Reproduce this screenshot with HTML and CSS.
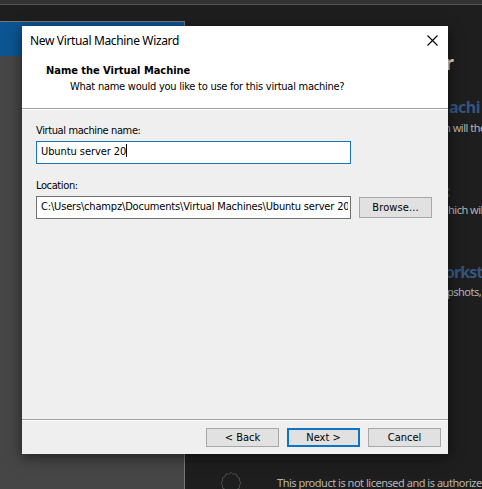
FILE: index.html
```html
<!DOCTYPE html>
<html lang="en">
<head>
<meta charset="utf-8">
<title>New Virtual Machine Wizard</title>
<link rel="stylesheet" href="styles.css">
</head>
<body>
<div class="app">
  <div class="toolbar"></div>
  <div class="workspace">
    <aside class="library"><div class="selected"></div></aside>
    <main class="home">
      <div class="hero"><span>r</span></div>
      <div class="link first"><span>achi</span></div>
      <div class="note n1"><span>n will the</span></div>
      <div class="link second"><span>:</span></div>
      <div class="note n2"><span>hich will</span></div>
      <div class="link third"><span>orkst</span></div>
      <div class="note n3"><span>pshots,</span></div>
      <div class="license">
        <svg width="24" height="24" viewBox="0 0 24 24"><path d="M12 1.500Q14 4 17 3Q17.500 6.500 20.500 7Q19.500 10 22 12Q19.500 14 20.500 17Q17.500 17.500 17 21Q14 20 12 22.500Q10 20 7 21Q6.500 17.500 3.500 17Q4.500 14 2 12Q4.500 10 3.500 7Q6.500 6.500 7 3Q10 4 12 1.500Z"/></svg>
        <span class="license-text">This product is not licensed and is authorize</span>
      </div>
    </main>
  </div>
</div>
<section class="dialog">
  <header class="head">
    <div class="titlebar">
      <span class="title">New Virtual Machine Wizard</span>
      <svg class="close" width="11" height="11" viewBox="0 0 11 11"><path d="M.5 .5L10.500 10.500M10.500 .5L.5 10.500"/></svg>
    </div>
    <h1><span>Name the Virtual Machine</span></h1>
    <p><span class="question">What name would you like to use for this virtual machine?</span></p>
  </header>
  <div class="content">
    <div class="label"><span>Virtual machine name:</span></div>
    <div class="field active"><span class="name">Ubuntu server 20</span><i class="caret"></i></div>
    <div class="label"><span>Location:</span></div>
    <div class="row">
      <div class="field"><div class="clip"><span class="path">C:\Users\champz\Documents\Virtual Machines\Ubuntu server 20</span></div></div>
      <div class="btn browse"><span>Browse...</span></div>
    </div>
  </div>
  <footer class="actions">
    <div class="btn"><span>&lt; Back</span></div>
    <div class="btn primary"><span>Next &gt;</span></div>
    <div class="btn"><span>Cancel</span></div>
  </footer>
</section>
</body>
</html>
```
FILE: styles.css
```css
* { box-sizing: border-box; }
body { margin: 0; width: 482px; height: 489px; overflow: hidden; background: #1e1e1e; font: 11px/14px "DejaVu Sans Condensed", "DejaVu Sans", sans-serif; font-stretch: condensed; color: #000; }
span { white-space: nowrap; }
.app { height: 489px; display: flex; flex-direction: column; overflow: hidden; }
.toolbar { height: 5px; flex: none; background: #333; border-bottom: 1px solid #575757; }
.workspace { flex: 1; display: flex; padding-top: 16px; min-height: 0; }
.library { width: 185px; flex: none; background: #464646; border-top: 1px solid #777; border-right: 1px solid #777; }
.selected { height: 34px; background: #0c5592; }
.home { flex: 1; min-width: 0; overflow: hidden; color: #b5b5b5; }
.home > div { padding-left: 264px; }
.hero { height: 77px; padding-top: 30px; font: bold 20px/24px "Noto Sans", sans-serif; color: #e6d9c8; }
.hero span { margin-left: -4px; }
.link { font: bold 16px/18px "Noto Sans", sans-serif; letter-spacing: -.5px; color: #34557f; }
.first { height: 23px; }
.note { font: 11px/14px "Noto Sans", sans-serif; letter-spacing: -.5px; }
.n1 { height: 61px; }
.n1 span { margin-left: -5px; }
.second { height: 21px; color: #444; }
.second span { margin-left: -3px; }
.n2 { height: 60px; }
.n2 span { margin-left: -1px; }
.third { height: 22px; }
.third span { margin-left: -4px; letter-spacing: -.9px; }
.n3 { height: 186px; }
.n3 span { margin-left: -2px; }
.home > .license { display: flex; padding-left: 34px; gap: 34px; height: 24px; }
.license svg { flex: none; fill: none; stroke: #4b5052; }
.license-text { font: 11px/18px "Noto Sans", sans-serif; letter-spacing: -.48px; padding-top: 3px; }

.dialog { position: absolute; left: 22px; top: 26px; width: 426px; height: 428px; display: flex; flex-direction: column; background: #efefef; box-shadow: 0 3px 13px rgba(0,0,0,.55); }
.head { height: 83px; background: #fff; border-bottom: 1px solid #a0a0a0; padding-left: 8px; }
.titlebar { height: 38px; display: flex; justify-content: space-between; padding: 6px 10px 0 0; font: 12px/18px "Noto Sans", sans-serif; letter-spacing: -.35px; }
.close { margin-top: 3px; fill: none; stroke: #000; stroke-width: 1.100; }
h1 { margin: 0 0 2px 16px; font-size: 11px; line-height: 14px; letter-spacing: -.03px; }
p { margin: 0 0 0 40px; }
.question { letter-spacing: -.25px; }
.content { flex: 1; border-top: 1px solid #fff; border-bottom: 1px solid #a0a0a0; padding: 14px 16px 0 14px; }
.label { height: 17px; letter-spacing: -.38px; }
.field { width: 315px; height: 23px; border: 1px solid #707070; background: #fff; display: flex; padding: 3px 2px 0 4px; }
.field.active { border-color: #1a74b8; margin-bottom: 15px; }
.name { letter-spacing: -.08px; }
.path { letter-spacing: -.17px; }
.caret { width: 1px; height: 13px; margin-top: -1px; background: #000; }
.clip { width: 307px; overflow: hidden; }
.row { display: flex; align-items: center; justify-content: space-between; }
.btn { width: 73px; height: 19px; border: 1px solid #a7a7a7; background: #e1e1e1; display: flex; justify-content: center; align-items: center; padding-top: 1px; }
.browse { height: 21px; letter-spacing: .1px; }
.primary { border: 2px solid #0f73c4; }
.actions { height: 34px; border-top: 1px solid #fff; display: flex; justify-content: flex-end; gap: 8px; padding: 7px 7px 0 0; }
```
